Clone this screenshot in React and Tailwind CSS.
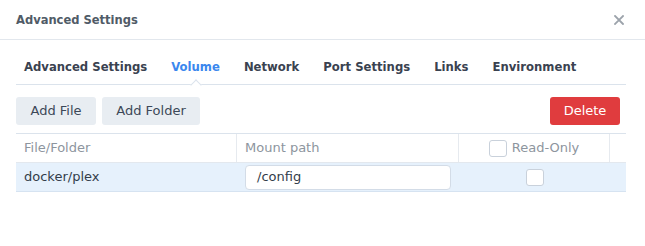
export default function App() {
  const tabs = ["Advanced Settings", "Volume", "Network", "Port Settings", "Links", "Environment"];
  return (
    <div className="w-[645px] h-[246px] bg-white font-['DejaVu_Sans',sans-serif] text-[#3a4553] overflow-hidden">
      <div className="h-[40px] border-b border-[#e2e7ed] flex items-center justify-between pl-4 pr-[21px]">
        <span className="font-['DejaVu_Sans_Condensed','DejaVu_Sans',sans-serif] font-bold text-[12.8px] leading-[16px] text-[#505b67] pt-[1px]">Advanced Settings</span>
        <svg width="10" height="10" viewBox="0 0 10 10">
          <path d="M1 1 L9 9 M9 1 L1 9" stroke="#9ca3ab" strokeWidth="1.8" strokeLinecap="square" />
        </svg>
      </div>
      <div className="ml-4 mr-[19px] h-[45px] border-b border-[#dbe3ec] flex items-start pl-2 gap-6 pt-[20px] relative">
        {tabs.map((t) => (
          <div key={t} className={`relative font-bold text-[11.65px] leading-[14px] ${t === "Volume" ? "text-[#3a87ee]" : "text-[#3a4250]"}`}>
            {t}
            {t === "Volume" && (
              <div className="absolute left-1/2 top-[21px] -translate-x-1/2 w-[8px] h-[8px] bg-white border-l border-t border-[#dbe3ec] rotate-45" />
            )}
          </div>
        ))}
      </div>
      <div className="ml-4 mr-[19px] mt-3 flex items-center justify-between pr-[6px]">
        <div className="flex gap-[6px]">
          <button className="h-[28px] w-[80px] rounded-[3px] bg-[#e8edf2] text-[13px] text-[#3c4858]">Add File</button>
          <button className="h-[28px] w-[98px] rounded-[3px] bg-[#e8edf2] text-[13px] text-[#3c4858]">Add Folder</button>
        </div>
        <button className="h-[28px] w-[70px] rounded-[3px] bg-[#e03c3e] text-[13px] text-white">Delete</button>
      </div>
      <div className="ml-4 mr-[19px] mt-2 border-t border-[#dbe3ec] text-[13px]">
        <div className="flex h-[29px] border-b border-[#e3e8ee] text-[#8d959e]">
          <div className="w-[221px] border-r border-[#e6eaef] pl-2 flex items-center">File/Folder</div>
          <div className="w-[222px] border-r border-[#e6eaef] pl-2 flex items-center">Mount path</div>
          <div className="w-[151px] border-r border-[#e6eaef] flex items-center justify-center gap-[5px]">
            <span className="w-[18px] h-[17px] rounded-[3px] border border-[#c9d1db] bg-white" />
            <span>Read-Only</span>
          </div>
          <div className="flex-1" />
        </div>
        <div className="flex h-[29px] border-b border-[#d6e3f1] bg-[#e6f1fc] text-[#333d4a]">
          <div className="w-[221px] pl-2 flex items-center">docker/plex</div>
          <div className="w-[222px] pl-2 flex items-center">
            <div className="w-[206px] h-[25px] rounded-[4px] border border-[#d3dce7] bg-white flex items-center pl-[11px]">/config</div>
          </div>
          <div className="w-[151px] flex items-center justify-center">
            <span className="w-[18px] h-[17px] rounded-[3px] border border-[#c9d1db] bg-white" />
          </div>
          <div className="flex-1" />
        </div>
      </div>
    </div>
  );
}
